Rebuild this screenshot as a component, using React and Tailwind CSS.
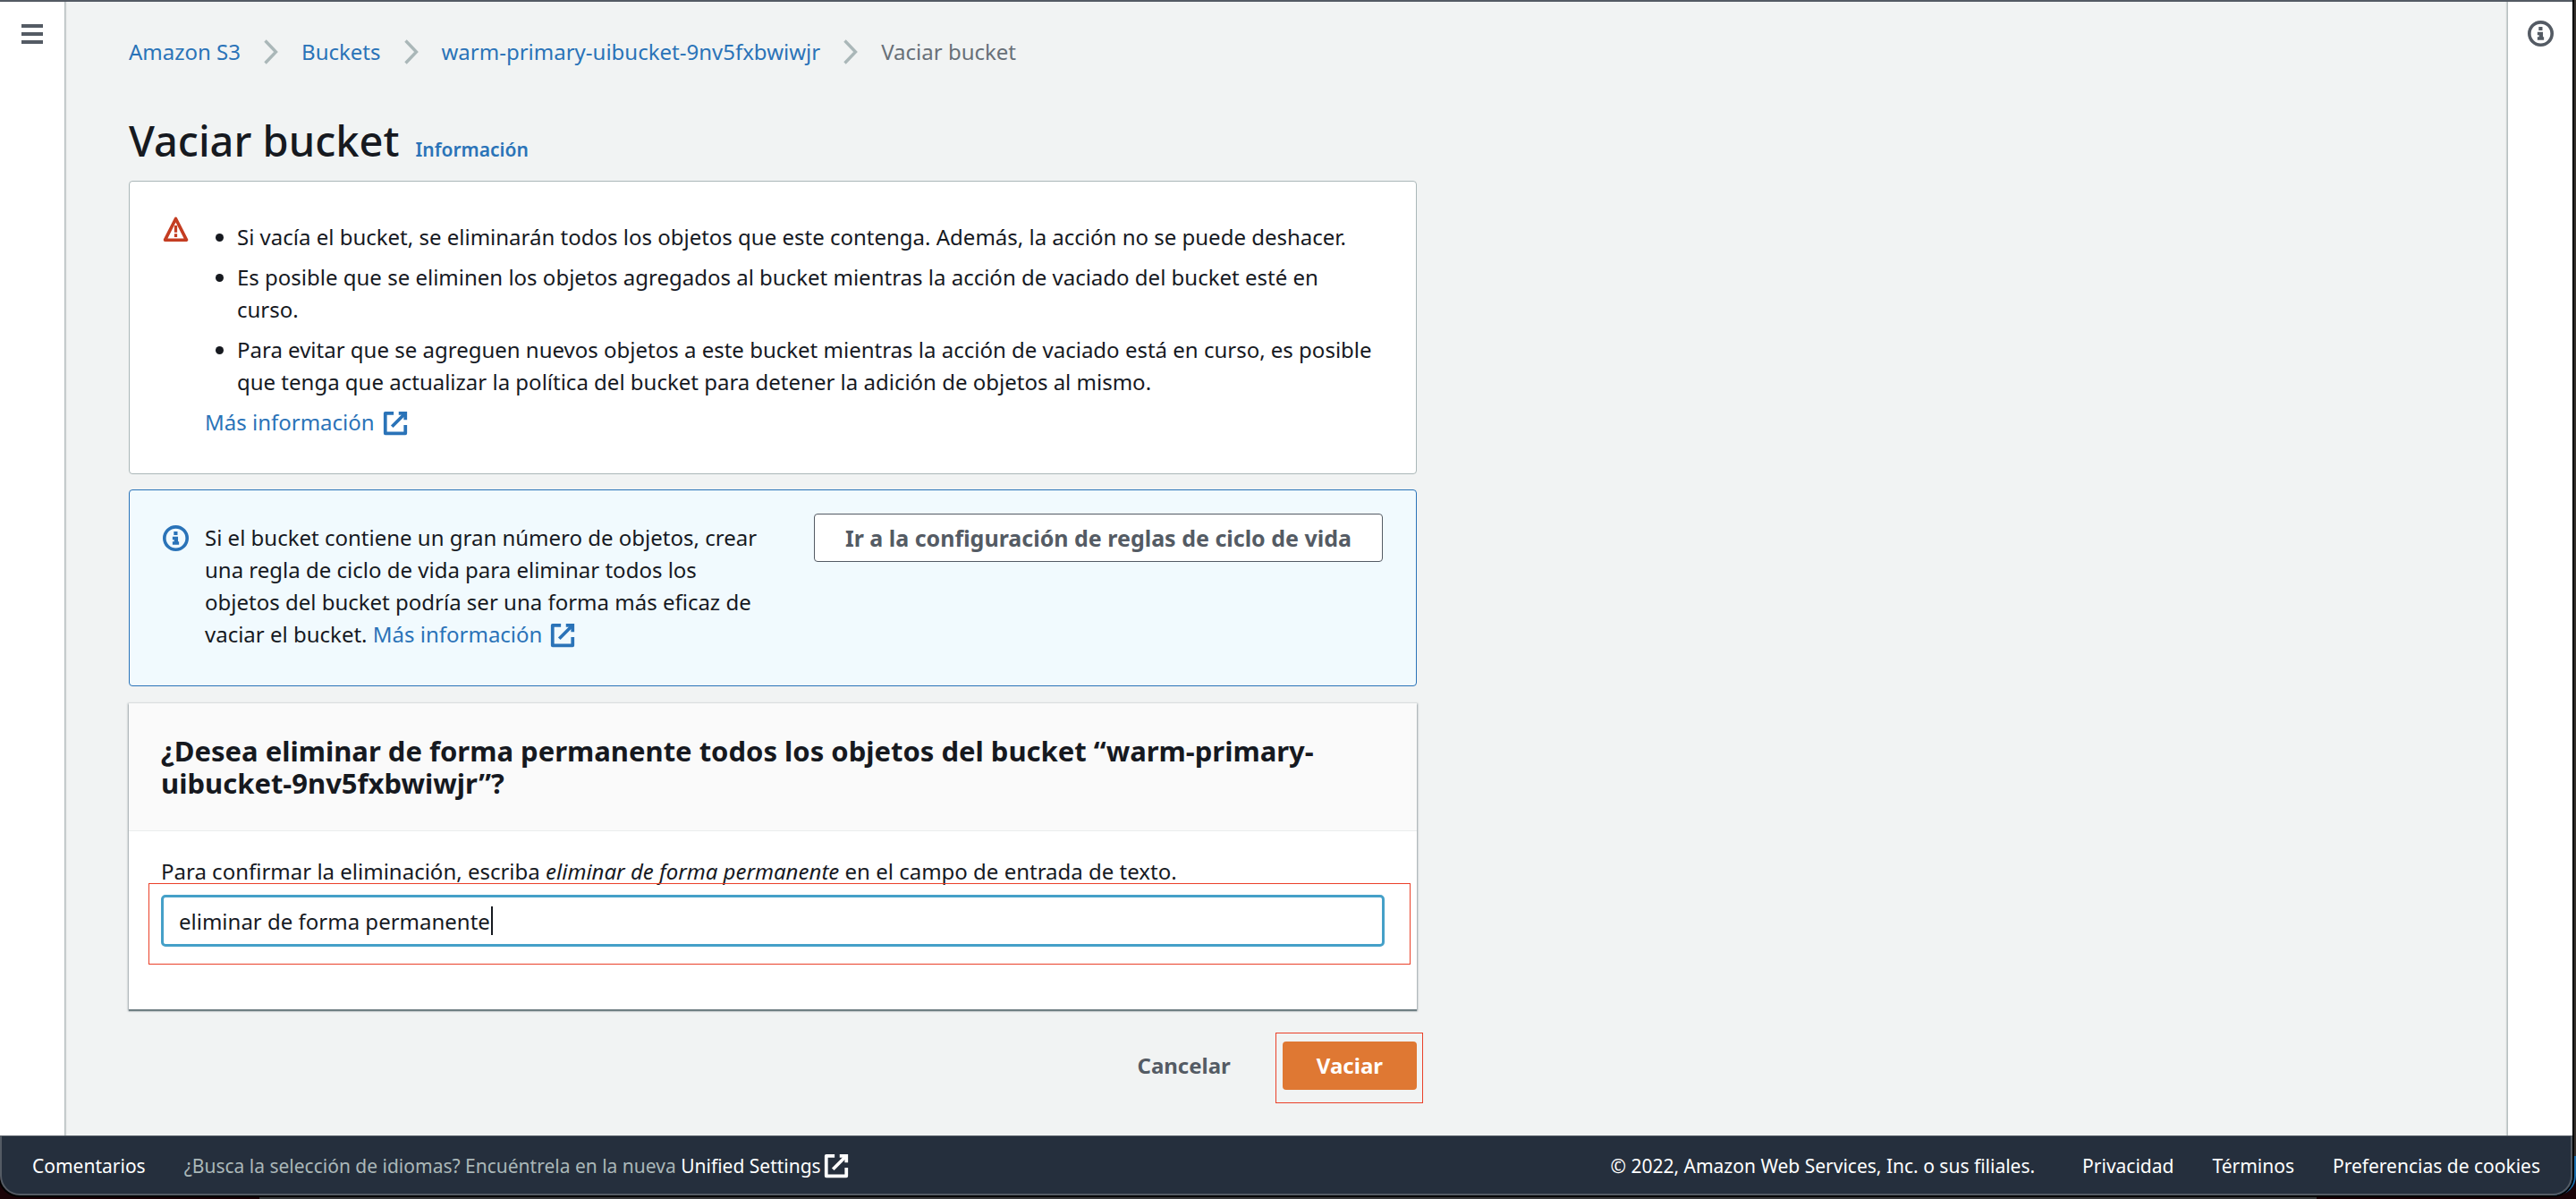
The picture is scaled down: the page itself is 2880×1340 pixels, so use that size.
import { useState } from "react";

function ExternalIcon() {
  return (
    <svg viewBox="0 0 16 16" className="inline-block size-[30px] shrink-0 align-[-7px]" fill="none" stroke="currentColor" strokeWidth="2" strokeLinejoin="round" aria-hidden="true">
      <path d="M10 2h4v4" strokeLinejoin="miter" />
      <path d="M6 10l8-8" />
      <path d="M14 9.05V14H2V2h5" />
    </svg>
  );
}

function InfoIcon() {
  return (
    <svg viewBox="0 0 16 16" className="size-[29px] shrink-0" aria-hidden="true">
      <circle cx="8" cy="8" r="7" fill="none" stroke="currentColor" strokeWidth="2" />
      <path fill="currentColor" d="M6.8 3.9h2.3v2.2H6.8zM6 7h3.4v3h.6v2H6v-2h1V9H6z" />
    </svg>
  );
}

function WarningIcon() {
  return (
    <svg viewBox="0 0 16 16" className="size-[29px] shrink-0" fill="none" stroke="currentColor" strokeWidth="2" aria-hidden="true">
      <path d="M8 1.9 14.6 15H1.4z" strokeLinejoin="round" />
      <path d="M8 6v4.3M8 11.2v2" strokeWidth="1.8" />
    </svg>
  );
}

function Chevron() {
  return (
    <svg viewBox="0 0 16 28" className="h-7 w-4 shrink-0" fill="none" stroke="#aab7b8" strokeWidth="3.4" aria-hidden="true">
      <path d="M1.5 1.5 13.5 14 1.5 26.5" />
    </svg>
  );
}

function MoreInfo() {
  return (
    <a href="#mas" className="whitespace-nowrap text-[#2a73b8]">
      Más información
      <span className="ml-2">
        <ExternalIcon />
      </span>
    </a>
  );
}

function Breadcrumbs() {
  const links = ["Amazon S3", "Buckets", "warm-primary-uibucket-9nv5fxbwiwjr"];
  return (
    <nav aria-label="Ruta de navegación">
      <ol className="flex items-center gap-[26px]">
        {links.map((name) => (
          <li key={name} className="flex items-center gap-[26px]">
            <a href="#ruta" className="text-[#2a73b8]">{name}</a>
            <Chevron />
          </li>
        ))}
        <li className="text-[#687078]">Vaciar bucket</li>
      </ol>
    </nav>
  );
}

function ConfirmForm() {
  const [text, setText] = useState("eliminar de forma permanente");
  return (
    <section className="mt-[19px] bg-white shadow-[0_1px_2px_1px_rgba(0,28,36,0.3),0_2px_1px_0_rgba(0,28,36,0.4)]">
      <header className="border-b border-[#eaeded] bg-[#fafafa] px-9 py-[35px]">
        <h2 className="text-[31px] leading-9 font-bold">
          ¿Desea eliminar de forma permanente todos los objetos del bucket “warm-primary-uibucket-9nv5fxbwiwjr”?
        </h2>
      </header>
      <div className="px-9 pt-[27px] pb-[70px]">
        <label htmlFor="confirmar" className="block">
          Para confirmar la eliminación, escriba <em>eliminar de forma permanente</em> en el campo de entrada de texto.
        </label>
        <div className="relative mt-2">
          <input
            id="confirmar"
            type="text"
            value={text}
            onChange={(e) => setText(e.target.value)}
            className="block h-[58px] w-full rounded-[5px] border-[3px] border-[#45a0c8] bg-white px-[17px] caret-transparent outline-none"
          />
          <span className="absolute top-[13px] left-[369px] h-8 w-0.5 bg-[#16191f]" />
          <span className="pointer-events-none absolute -top-[13px] -right-[29px] -bottom-5 -left-[14px] border border-[#ea4029]" />
        </div>
      </div>
    </section>
  );
}

function Footer() {
  return (
    <footer className="flex items-center justify-between rounded-b-[22px] border-x-2 border-t border-b-2 border-[#545b64] bg-[#252f3d] px-[34px] pt-[18px] pb-4 text-[21px] leading-[30px] text-white">
      <div className="flex items-center gap-[43px]">
        <button type="button">Comentarios</button>
        <p className="text-[#aab7b8]">
          ¿Busca la selección de idiomas? Encuéntrela en la nueva{" "}
          <a href="#ajustes" className="text-white">
            Unified Settings
            <span className="ml-0.5">
              <ExternalIcon />
            </span>
          </a>
        </p>
      </div>
      <div className="flex items-center gap-[43px]">
        <span className="mr-2.5">© 2022, Amazon Web Services, Inc. o sus filiales.</span>
        <a href="#privacidad">Privacidad</a>
        <a href="#terminos">Términos</a>
        <a href="#cookies">Preferencias de cookies</a>
      </div>
    </footer>
  );
}

export default function App() {
  return (
    <div className="relative flex min-h-screen bg-[#1a0307] pr-1 pb-1 font-['Noto_Sans',sans-serif] text-[24px] leading-9 text-[#16191f]">
      <div className="absolute top-0 right-0 bottom-12 w-4 bg-[#38332f]" />
      <div className="absolute right-0 bottom-1 h-11 w-10 rounded-br-[22px] bg-[#1c6fae]" />
      <div className="absolute right-[290px] bottom-0 left-[290px] h-0.5 bg-[#3a3a3c]" />
      <div className="relative flex flex-1 flex-col rounded-b-[22px] shadow-[0_0_0_2px_#000]">
        <div className="flex flex-1 border-t-2 border-[#545b64] bg-[#f1f3f3]">
          <aside className="flex w-[73px] shrink-0 justify-center border-r border-[#b8c0c1] bg-white pt-[25px] shadow-[1px_0_1px_rgba(0,28,36,0.15)]">
            <button type="button" aria-label="Abrir navegación" className="flex h-[22px] w-6 flex-col justify-between text-[#545b64]">
              <span className="h-1 w-full bg-current" />
              <span className="h-1 w-full bg-current" />
              <span className="h-1 w-full bg-current" />
            </button>
          </aside>
          <main className="flex-1 px-[71px] pt-[38px] pb-12">
            <Breadcrumbs />
            <div className="mt-[51px] flex items-baseline gap-[18px]">
              <h1 className="text-[47px] leading-[60px] font-medium">Vaciar bucket</h1>
              <a href="#info" className="text-[21px] leading-[30px] font-semibold text-[#2a73b8]">Información</a>
            </div>
            <div className="mt-[15px] w-full max-w-[1440px]">
              <section className="flex gap-[18px] rounded-[4px] border border-[#aab7b8] bg-white px-[37px] pt-[38px] pb-[39px]">
                <span className="text-[#c43d22]">
                  <WarningIcon />
                </span>
                <div className="flex-1 pt-1.5">
                  <ul className="flex list-disc flex-col gap-[9px] pl-9">
                    <li>Si vacía el bucket, se eliminarán todos los objetos que este contenga. Además, la acción no se puede deshacer.</li>
                    <li>Es posible que se eliminen los objetos agregados al bucket mientras la acción de vaciado del bucket esté en curso.</li>
                    <li>Para evitar que se agreguen nuevos objetos a este bucket mientras la acción de vaciado está en curso, es posible que tenga que actualizar la política del bucket para detener la adición de objetos al mismo.</li>
                  </ul>
                  <p className="mt-[9px]">
                    <MoreInfo />
                  </p>
                </div>
              </section>
              <section className="mt-[17px] flex items-start rounded-[4px] border border-[#2a73b8] bg-[#f1fafe] px-[37px] pt-[26px] pb-[39px]">
                <span className="mt-[13px] mr-[18px] text-[#2a73b8]">
                  <InfoIcon />
                </span>
                <p className="mt-[9px] mr-[50px] flex-1">
                  Si el bucket contiene un gran número de objetos, crear una regla de ciclo de vida para eliminar todos los objetos del bucket podría ser una forma más eficaz de vaciar el bucket. <MoreInfo />
                </p>
                <button type="button" className="h-[54px] shrink-0 rounded-[4px] border border-[#545b64] bg-white px-[34px] text-[25px] font-bold text-[#545b64]">
                  Ir a la configuración de reglas de ciclo de vida
                </button>
              </section>
              <ConfirmForm />
              <div className="mt-9 flex justify-end gap-5">
                <button type="button" className="h-[54px] px-[38px] font-bold text-[#545b64]">Cancelar</button>
                <div className="relative">
                  <button type="button" className="h-[54px] rounded-[4px] bg-[#df7833] px-[38px] font-bold text-white">Vaciar</button>
                  <span className="pointer-events-none absolute -top-2.5 -right-[7px] -bottom-[15px] -left-2 border border-[#ea4029]" />
                </div>
              </div>
            </div>
          </main>
          <aside className="flex w-[73px] shrink-0 items-start justify-center border-l border-[#b8c0c1] bg-white pt-[21px] shadow-[-1px_0_1px_rgba(0,28,36,0.15)]">
            <button type="button" aria-label="Información" className="text-[#545b64]">
              <InfoIcon />
            </button>
          </aside>
        </div>
        <Footer />
      </div>
    </div>
  );
}
